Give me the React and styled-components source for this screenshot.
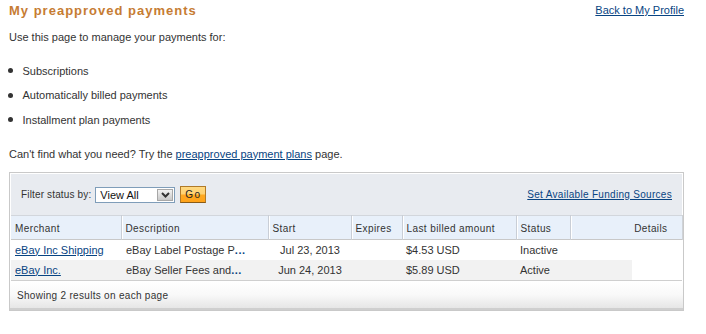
import React from "react";
import styled, { createGlobalStyle } from "styled-components";

const Global = createGlobalStyle`
  html, body { margin: 0; padding: 0; background: #fff; }
  body {
    font-family: "Liberation Sans", Arial, Helvetica, sans-serif;
    font-size: 11px;
    color: #333;
  }
`;

const Page = styled.div`
  width: 675px;
  padding: 0 22px 0 9px;
`;

const TitleRow = styled.div`
  display: flex;
  justify-content: space-between;
  align-items: flex-start;
  padding-top: 3px;
  height: 16px;
`;

const Title = styled.h1`
  margin: 0;
  font-size: 13px;
  line-height: 16px;
  font-weight: bold;
  letter-spacing: 1px;
  color: #c67c33;
`;

const Link = styled.a`
  color: #084482;
  text-decoration: underline;
  cursor: pointer;
  font-size: ${(p) => (p.$small ? 10 : 11)}px;
  letter-spacing: ${(p) => (p.$small ? 0.3 : 0)}px;
  line-height: 14px;
`;

const Para = styled.p`
  margin: ${(p) => p.$mt || 0}px 0 0;
  line-height: 14px;
`;

const List = styled.ul`
  list-style: none;
  margin: 14px 0 0;
  padding: 0;
`;

const Item = styled.li`
  display: flex;
  align-items: center;
  height: 24.5px;
  line-height: 14px;
  padding-top: 1px;
  box-sizing: border-box;
`;

const Bullet = styled.span`
  width: 5px;
  height: 5px;
  border-radius: 50%;
  background: #333;
  margin: 0 9.5px 0 -1px;
  flex: none;
`;

const Box = styled.div`
  margin-top: 11px;
  border: 1px solid #c9c9c9;
  padding: 1px 1px 0;
`;

const FilterBar = styled.div`
  display: flex;
  align-items: center;
  justify-content: space-between;
  height: 41px;
  background: #e8ebf0;
  padding: 1px 10px 0 10px;
  box-sizing: border-box;
`;

const FilterLeft = styled.div`
  display: flex;
  align-items: center;
`;

const Label = styled.span`
  margin-right: 4px;
  font-size: 10px;
  letter-spacing: 0.15px;
`;

const Select = styled.div`
  display: flex;
  align-items: center;
  justify-content: space-between;
  width: 80px;
  height: 16px;
  box-sizing: border-box;
  border: 1px solid #7f9db9;
  background: #fff;
  padding: 0 1px 0 4px;
  color: #111;
  font-size: 11px;
`;

const Arrow = styled.span`
  display: flex;
  align-items: center;
  justify-content: center;
  width: 16px;
  height: 12px;
  box-sizing: border-box;
  border: 1px solid #a7a7a7;
  background: linear-gradient(#f2f2f2, #c9c9c9);
`;

const GoButton = styled.button`
  margin-left: 5px;
  width: 26px;
  height: 17px;
  box-sizing: border-box;
  padding: 0;
  border: 1px solid #b07a29;
  border-bottom-color: #8a5b16;
  background: linear-gradient(#ffd980 0%, #ffd070 48%, #ffa820 52%, #ffa31a 100%);
  font-family: "Liberation Sans", Arial, sans-serif;
  font-size: 10px;
  letter-spacing: 1.5px;
  color: #222;
  line-height: 14px;
`;

const Table = styled.table`
  width: 100%;
  border-collapse: collapse;
  table-layout: fixed;
`;

const HeadRow = styled.tr`
  background: #e8f0fa;
  border-top: 1px solid #d2d6dc;
  border-bottom: 1px solid #c8c8c8;
`;

const Th = styled.th`
  width: ${(p) => p.$w}px;
  height: 23px;
  box-sizing: border-box;
  padding: 2px ${(p) => (p.$right ? 14 : 4)}px 0 4px;
  text-align: ${(p) => (p.$right ? "right" : "left")};
  font-weight: normal;
  font-size: 10px;
  line-height: 21px;
  color: #333;
  border-left: ${(p) => (p.$first ? "none" : "1px solid #c9ced6")};
  box-shadow: ${(p) => (p.$first ? "none" : "inset 1px 0 0 #fff")};
  border-right: ${(p) => (p.$right ? "1px solid #cfd3d8" : "none")};
  letter-spacing: 0.4px;
`;

const Row = styled.tr`
  border-bottom: ${(p) => (p.$last ? "1px solid #cfcfcf" : "none")};
`;

const Td = styled.td`
  height: 20px;
  padding: 0 4px;
  line-height: 20px;
  white-space: nowrap;
  overflow: hidden;
  text-align: ${(p) => (p.$center ? "center" : "left")};
  padding-left: ${(p) => (p.$pl != null ? p.$pl : 5)}px;
  background: ${(p) =>
    p.$shade
      ? p.$partial
        ? "linear-gradient(to right, #f2f2f2 62px, #fff 62px)"
        : "#f2f2f2"
      : "#fff"};
`;

const Dots = styled.b`
  color: #084482;
  letter-spacing: 0.5px;
`;

const Footer = styled.div`
  height: 29px;
  box-sizing: border-box;
  padding: 1px 0 0 7px;
  margin: 0 -1px;
  font-size: 10px;
  line-height: 28px;
  letter-spacing: 0.3px;
  background: linear-gradient(#ffffff 0%, #f9f9f9 50%, #e6e6e6 100%);
  border-bottom: 2px solid #cfcfcf;
`;

const cols = [
  { key: "m", label: "Merchant", w: 110 },
  { key: "d", label: "Description", w: 147 },
  { key: "s", label: "Start", w: 83 },
  { key: "e", label: "Expires", w: 51 },
  { key: "a", label: "Last billed amount", w: 114 },
  { key: "st", label: "Status", w: 54 },
  { key: "det", label: "Details", w: 112 },
];

const rows = [
  { merchant: "eBay Inc Shipping", desc: "eBay Label Postage P", start: "Jul 23, 2013", amount: "$4.53 USD", status: "Inactive" },
  { merchant: "eBay Inc.", desc: "eBay Seller Fees and", start: "Jun 24, 2013", amount: "$5.89 USD", status: "Active" },
];

export default function App() {
  return (
    <>
      <Global />
      <Page>
        <TitleRow>
          <Title>My preapproved payments</Title>
          <Link>Back to My Profile</Link>
        </TitleRow>
        <Para $mt={11}>Use this page to manage your payments for:</Para>
        <List>
          {["Subscriptions", "Automatically billed payments", "Installment plan payments"].map((t) => (
            <Item key={t}>
              <Bullet />
              {t}
            </Item>
          ))}
        </List>
        <Para $mt={15}>
          Can't find what you need? Try the <Link>preapproved payment plans</Link> page.
        </Para>
        <Box>
          <FilterBar>
            <FilterLeft>
              <Label>Filter status by:</Label>
              <Select>
                View All
                <Arrow>
                  <svg width="9" height="6" viewBox="0 0 9 6">
                    <path d="M1 1 L4.5 4.5 L8 1" fill="none" stroke="#333" strokeWidth="2" />
                  </svg>
                </Arrow>
              </Select>
              <GoButton>Go</GoButton>
            </FilterLeft>
            <Link $small>Set Available Funding Sources</Link>
          </FilterBar>
          <Table>
            <thead>
              <HeadRow>
                {cols.map((c, i) => (
                  <Th key={c.key} $w={c.w} $first={i === 0} $right={c.key === "det"}>
                    {c.label}
                  </Th>
                ))}
              </HeadRow>
            </thead>
            <tbody>
              {rows.map((r, i) => {
                const shade = i % 2 === 1;
                return (
                  <Row key={r.merchant} $last={i === rows.length - 1}>
                    <Td $shade={shade} $pl={4}>
                      <Link>{r.merchant}</Link>
                    </Td>
                    <Td $shade={shade}>
                      {r.desc}
                      <Dots>...</Dots>
                    </Td>
                    <Td $shade={shade} $center>{r.start}</Td>
                    <Td $shade={shade}></Td>
                    <Td $shade={shade} $pl={4}>{r.amount}</Td>
                    <Td $shade={shade} $pl={4}>{r.status}</Td>
                    <Td $shade={shade} $partial></Td>
                  </Row>
                );
              })}
            </tbody>
          </Table>
          <Footer>Showing 2 results on each page</Footer>
        </Box>
      </Page>
    </>
  );
}
